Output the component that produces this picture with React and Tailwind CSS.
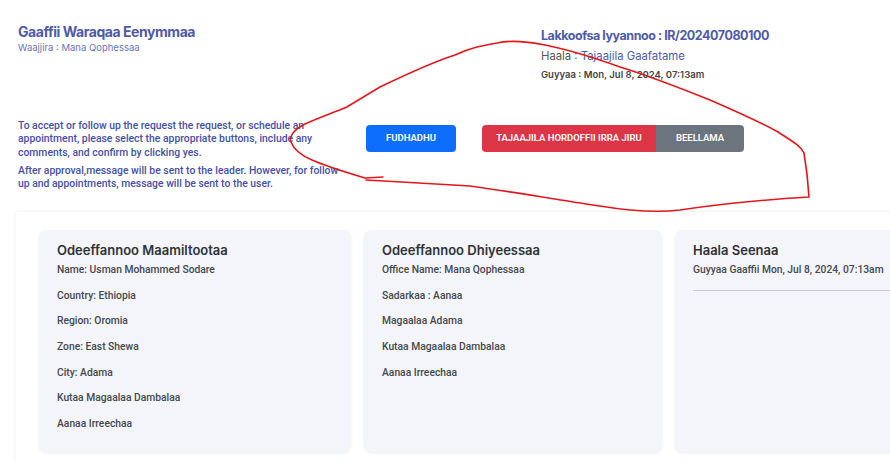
import React from "react";

const body = { fontFamily: 'Roboto, "Liberation Sans", Arial, sans-serif' };
const head = { fontFamily: 'Inter, "Liberation Sans", sans-serif' };

function Card({ title, items, width, children }) {
  return (
    <div
      className={`shrink-0 h-[222px] rounded-[8px] bg-[#f4f5fa] shadow-[0_1px_3px_rgba(0,0,0,0.08)] pl-[18px] pt-[11px] ${width}`}
    >
      <div className="text-[13px] font-semibold text-[#2f3236] leading-[18px]" style={head}>
        {title}
      </div>
      <div className="mt-[4px] flex flex-col gap-[11.7px]">
        {items.map((t) => (
          <div key={t} className="text-[10.3px] font-medium text-[#45484d] leading-[14px]" style={body}>
            {t}
          </div>
        ))}
      </div>
      {children}
    </div>
  );
}

export default function App() {
  return (
    <div className="relative w-[890px] h-[462px] overflow-hidden bg-white">
      {/* header */}
      <div className="flex pt-[23px] pl-[18px]">
        <div className="w-[523px]">
          <div className="text-[14px] font-bold text-[#4f5aa8] leading-[18px] tracking-[-0.45px]" style={head}>
            Gaaffii Waraqaa Eenymmaa
          </div>
          <div className="text-[9.5px] text-[#6a74b8] leading-[13px]" style={head}>
            Waajjira : Mana Qophessaa
          </div>
        </div>
        <div className="pt-[5px]">
          <div className="text-[12.5px] font-bold text-[#4f5aa8] leading-[16px] tracking-[-0.45px]" style={head}>
            Lakkoofsa Iyyannoo : IR/202407080100
          </div>
          <div className="mt-[5px] text-[11.3px] leading-[14px] text-[#555]" style={head}>
            Haala : <span className="text-[#4f5aa8]">Tajaajila Gaafatame</span>
          </div>
          <div className="mt-[5px] text-[9.5px] font-semibold leading-[13px] text-[#444]" style={head}>
            Guyyaa : Mon, Jul 8, 2024, 07:13am
          </div>
        </div>
      </div>

      {/* instructions + buttons */}
      <div className="flex items-start pl-[18px] mt-[38px]">
        <div className="w-[348px] text-[10.4px] font-medium text-[#4650a6] leading-[13.3px] whitespace-nowrap" style={body}>
          <p>
            To accept or follow up the request the request, or schedule an
            <br />
            appointment, please select the appropriate buttons, include any
            <br />
            comments, and confirm by clicking yes.
          </p>
          <p className="mt-[5px]">
            After approval,message will be sent to the leader. However, for follow-
            <br />
            up and appointments, message will be sent to the user.
          </p>
        </div>
        <div className="flex items-center mt-[6px]">
          <button
            className="h-[27px] w-[90px] rounded-[4px] bg-[#0d6efd] text-white text-[9.5px] font-semibold"
            style={body}
          >
            FUDHADHU
          </button>
          <div className="ml-[26px] flex rounded-[4px] overflow-hidden">
            <button className="h-[27px] w-[174px] bg-[#dc3545] text-white text-[9.5px] font-semibold" style={body}>
              TAJAAJILA HORDOFFII IRRA JIRU
            </button>
            <button className="h-[27px] w-[88px] bg-[#6c757d] text-white text-[9.5px] font-semibold" style={body}>
              BEELLAMA
            </button>
          </div>
        </div>
      </div>

      {/* cards panel */}
      <div className="absolute left-[16px] top-[212px] w-[900px] h-[270px] bg-white shadow-[0_0_4px_rgba(0,0,0,0.08)]" />
      <div className="absolute left-[16px] top-[212px] w-[900px] pl-[23px] pt-[18px]">
        <div className="flex gap-[13px]">
          <Card
            title="Odeeffannoo Maamiltootaa"
            width="w-[312px]"
            items={[
              "Name: Usman Mohammed Sodare",
              "Country: Ethiopia",
              "Region: Oromia",
              "Zone: East Shewa",
              "City: Adama",
              "Kutaa Magaalaa Dambalaa",
              "Aanaa Irreechaa",
            ]}
          />
          <Card
            title="Odeeffannoo Dhiyeessaa"
            width="w-[298px]"
            items={[
              "Office Name: Mana Qophessaa",
              "Sadarkaa : Aanaa",
              "Magaalaa Adama",
              "Kutaa Magaalaa Dambalaa",
              "Aanaa Irreechaa",
            ]}
          />
          <Card title="Haala Seenaa" width="w-[300px]" items={["Guyyaa Gaaffii Mon, Jul 8, 2024, 07:13am"]}>
            <div className="mt-[13px] h-px bg-[#c9ccd6]" />
          </Card>
        </div>
      </div>

      {/* red annotation */}
      <svg className="absolute left-0 top-0 pointer-events-none" width="890" height="462">
        <path
          d="M366 180 C400 182 440 184 470 186 C520 193 560 200 600 206 C630 211 655 213 680 210 C720 204 760 200 809 197 C808 180 806 165 804 153 C800 145 790 140 778 132 C760 122 740 113 710 100 C680 88 650 76 620 67 C595 58 570 50 545 45 C525 41 510 40 497 43 C480 46 470 48 455 55 C430 63 405 75 380 87 C365 96 355 102 347 107 C330 114 318 118 305 124 C293 130 289 137 291 142 C294 150 300 155 312 160 C325 166 345 172 365 178 L383 177"
          fill="none"
          stroke="#e4161b"
          strokeWidth="1.6"
          strokeLinejoin="round"
          strokeLinecap="round"
        />
      </svg>
    </div>
  );
}
